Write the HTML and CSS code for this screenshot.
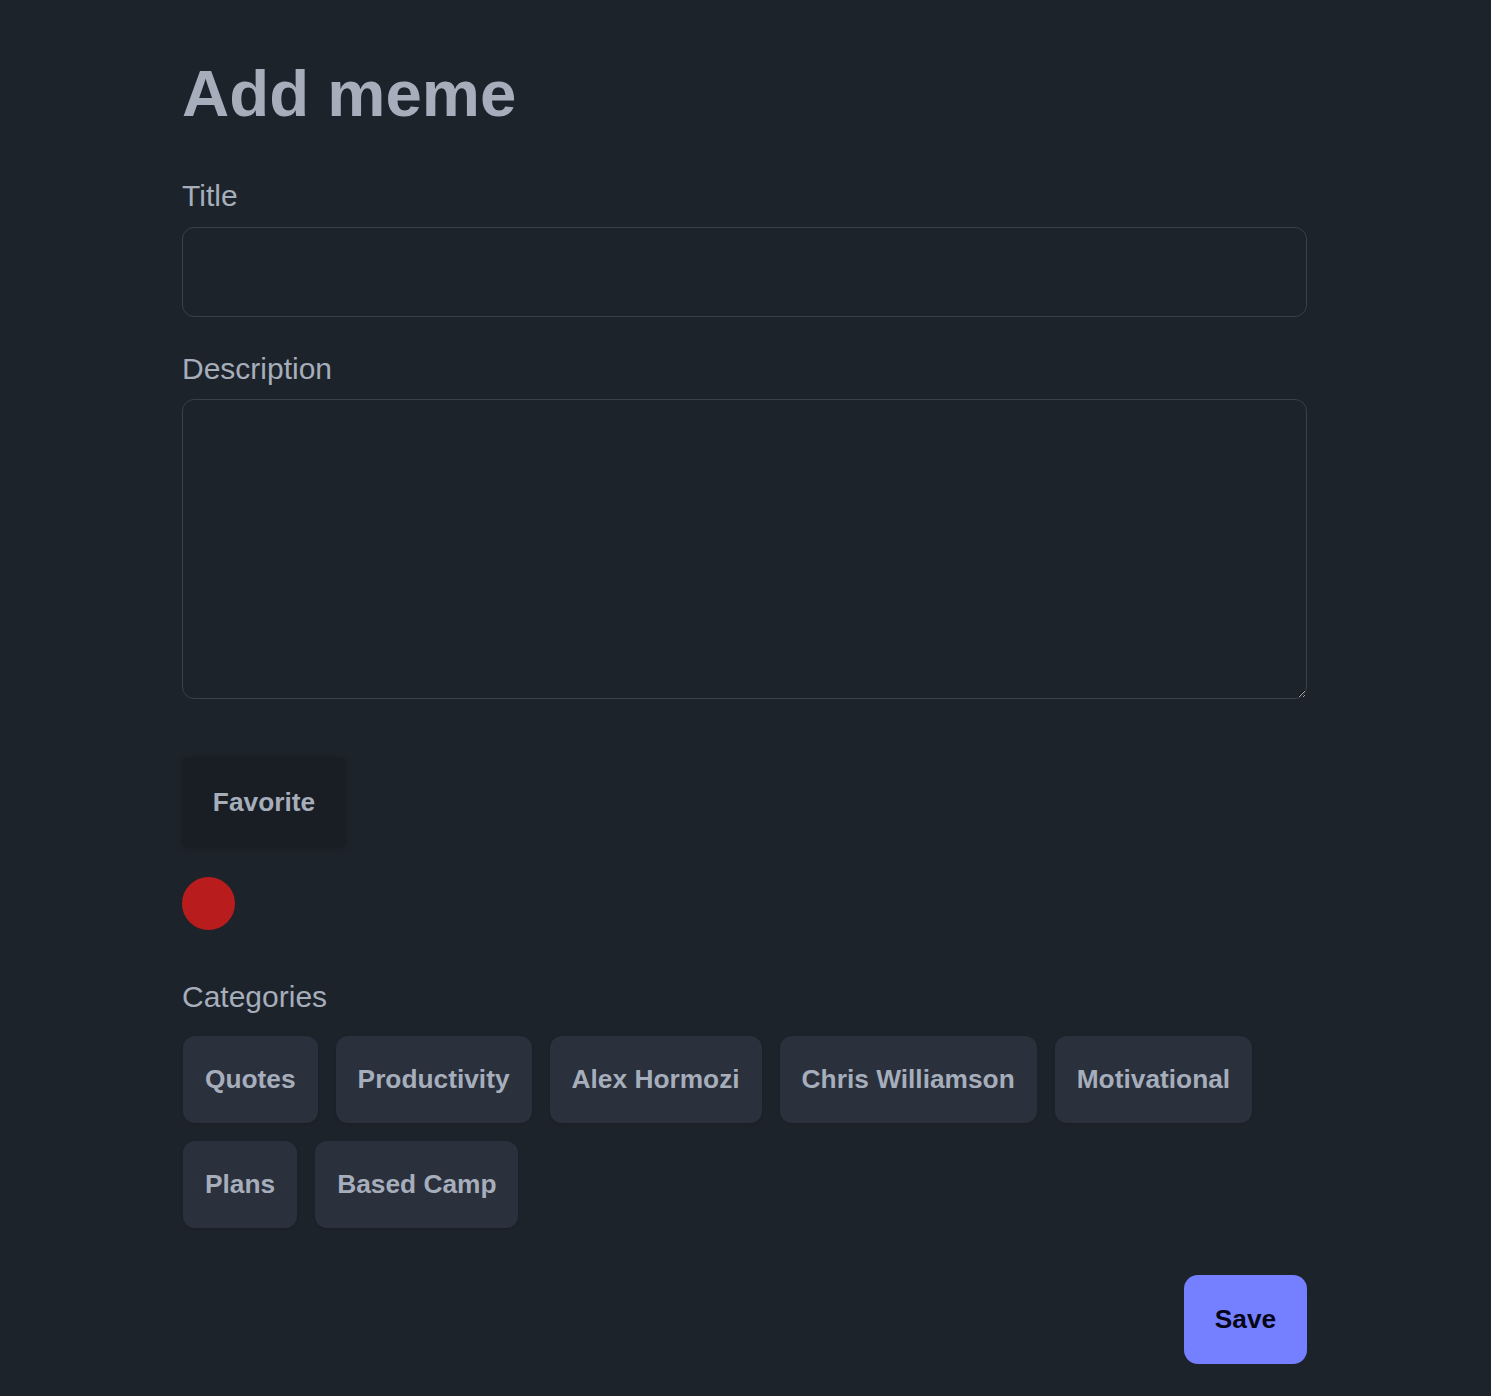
FILE: index.html
```html
<!DOCTYPE html>
<html lang="en">
<head>
<meta charset="utf-8">
<title>Add meme</title>
<link rel="stylesheet" href="styles.css">
</head>
<body>
<main class="page">
  <h1 class="heading">Add meme</h1>
  <form class="form">
    <label class="label" for="title">Title</label>
    <input class="input" id="title" type="text">
    <label class="label label-desc" for="desc">Description</label>
    <textarea class="textarea" id="desc"></textarea>
    <button type="button" class="btn-fav">Favorite</button>
    <div class="dot"></div>
    <div class="label label-cat">Categories</div>
    <div class="chips">
      <button type="button" class="chip">Quotes</button>
      <button type="button" class="chip">Productivity</button>
      <button type="button" class="chip">Alex Hormozi</button>
      <button type="button" class="chip">Chris Williamson</button>
      <button type="button" class="chip">Motivational</button>
      <button type="button" class="chip">Plans</button>
      <button type="button" class="chip">Based Camp</button>
    </div>
    <div class="actions">
      <button type="button" class="btn-save">Save</button>
    </div>
  </form>
</main>
</body>
</html>
```

FILE: styles.css
```css
* { box-sizing: border-box; }
html, body {
  margin: 0;
  padding: 0;
  background: #1d232a;
  color: #a6adbb;
  font-family: "Liberation Sans", Arial, sans-serif;
}
.page {
  width: 1125px;
  margin: 0 auto;
  padding-top: 58px;
  padding-bottom: 32px;
  position: relative;
  left: -1px;
}
.heading {
  margin: 0;
  font-size: 65.4px;
  line-height: 72px;
  font-weight: 700;
  color: #a6adbb;
}
.form {
  display: flex;
  flex-direction: column;
  align-items: flex-start;
  margin-top: 48px;
}
.label {
  display: block;
  font-size: 30px;
  line-height: 36px;
  color: #a6adbb;
}
.input {
  display: block;
  width: 100%;
  height: 90px;
  margin-top: 13px;
  background: #1d232a;
  border: 1px solid #3a4049;
  border-radius: 12px;
  color: #a6adbb;
  font: inherit;
  font-size: 26px;
  padding: 0 20px;
  outline: none;
}
.label-desc { margin-top: 34px; }
.textarea {
  display: block;
  width: 100%;
  height: 300px;
  margin-top: 12px;
  background: #1d232a;
  border: 1px solid #3a4049;
  border-radius: 12px;
  color: #a6adbb;
  font: inherit;
  font-size: 26px;
  padding: 16px 20px;
  outline: none;
  resize: vertical;
}
.btn-fav {
  margin-top: 58px;
  height: 90px;
  width: 164px;
  background: #191e24;
  border: none;
  border-radius: 6px;
  box-shadow: 0 1px 6px rgba(0,0,0,0.18);
  color: #a6adbb;
  font-family: inherit;
  font-size: 26.3px;
  font-weight: 700;
  padding: 0;
  cursor: pointer;
}
.dot {
  margin-top: 30px;
  width: 53px;
  height: 53px;
  border-radius: 50%;
  background: #b91c1c;
}
.label-cat { margin-top: 49px; }
.chips {
  margin-top: 21px;
  display: flex;
  flex-wrap: wrap;
  gap: 18px;
  width: 100%;
  padding-left: 1px;
}
.chip {
  height: 87px;
  padding: 0 22px;
  background: #2a303c;
  border: none;
  border-radius: 12px;
  box-shadow: 0 1px 3px rgba(0,0,0,0.12);
  color: #a6adbb;
  font-family: inherit;
  font-size: 26.3px;
  font-weight: 700;
  cursor: pointer;
}
.actions {
  width: 100%;
  display: flex;
  justify-content: flex-end;
  margin-top: 47px;
}
.btn-save {
  width: 123px;
  height: 89px;
  background: #7480ff;
  border: none;
  border-radius: 14px;
  color: #050617;
  font-family: inherit;
  font-size: 26.3px;
  font-weight: 700;
  cursor: pointer;
}
```
